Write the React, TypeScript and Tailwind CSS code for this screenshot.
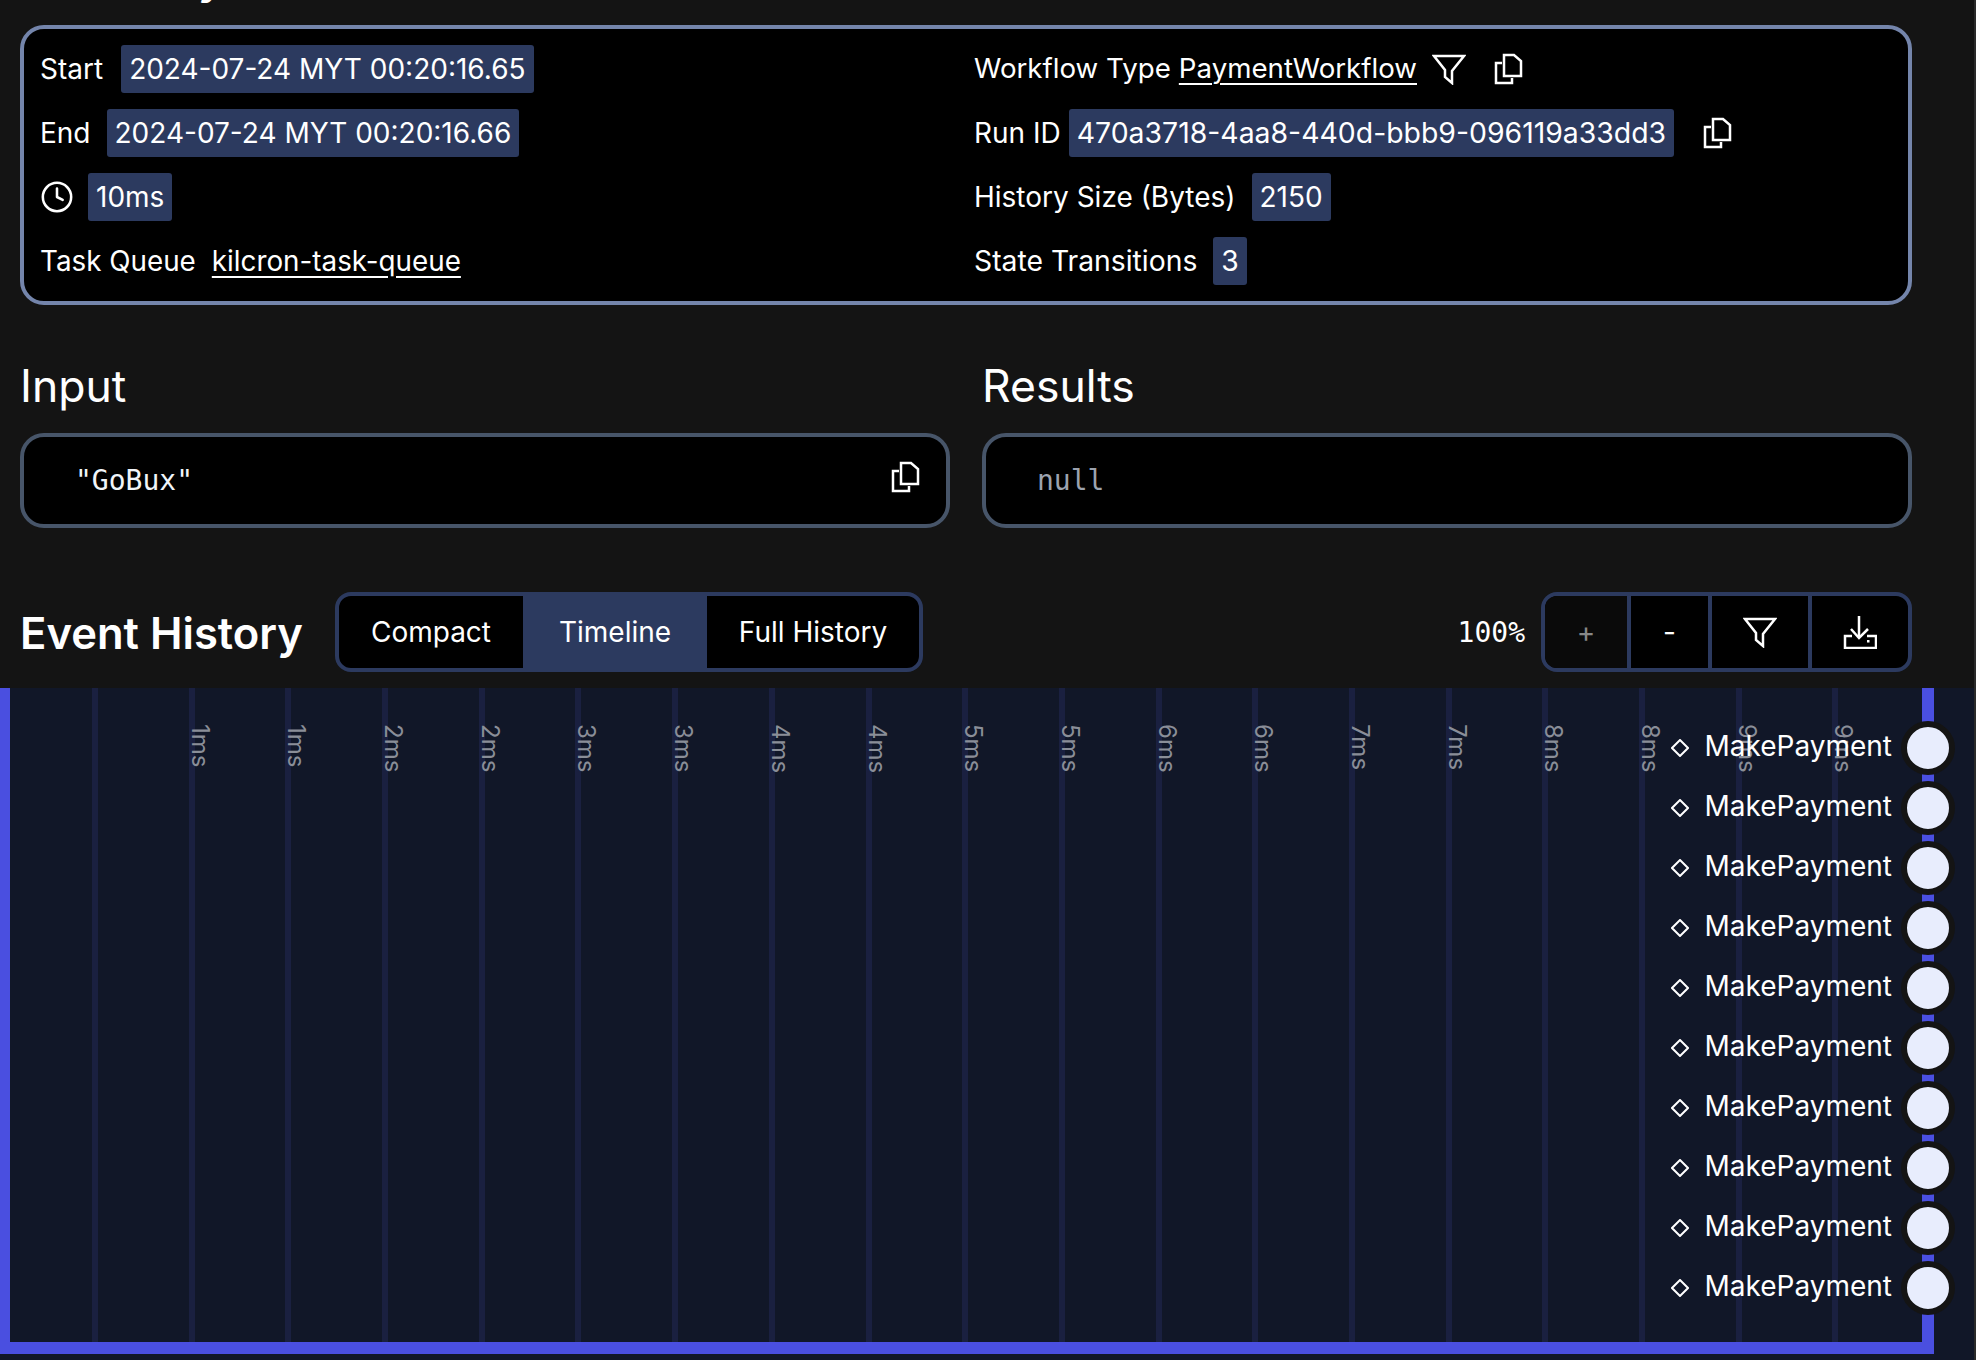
import { Clock } from 'lucide-react';

const ticks = ['', '1ms', '1ms', '2ms', '2ms', '3ms', '3ms', '4ms', '4ms', '5ms', '5ms', '6ms', '6ms', '7ms', '7ms', '8ms', '8ms', '9ms', '9ms'];

function Tag({ children }: { children: React.ReactNode }) {
  return <span className="inline-flex h-12 items-center rounded-[3px] bg-[#2c3a5f] px-2">{children}</span>;
}

function FilterIcon({ className }: { className?: string }) {
  return (
    <svg viewBox="0 0 34 32" fill="none" stroke="currentColor" strokeWidth="2.5" className={className}>
      <path d="M2 3H32L20 18V30L13 24V17Z" />
    </svg>
  );
}

function CopyIcon({ className }: { className?: string }) {
  return (
    <svg viewBox="0 0 30 32" fill="none" stroke="currentColor" strokeWidth="2.5" className={className}>
      <path d="M10 2H20L27 8V23H10Z" />
      <path d="M8 10H2V30H18V25" />
    </svg>
  );
}

function DownloadIcon({ className }: { className?: string }) {
  return (
    <svg viewBox="0 0 34 34" fill="none" stroke="currentColor" strokeWidth="2.5" className={className}>
      <path d="M16 1V22" />
      <path d="M8 14L16 23L25 14" />
      <path d="M9 21H2V33H33V21H24" />
      <rect x="24" y="25" width="2.5" height="2.5" fill="currentColor" stroke="none" />
    </svg>
  );
}

function Diamond() {
  return (
    <svg viewBox="0 0 18 18" fill="none" stroke="currentColor" strokeWidth="2" className="h-[18px] w-[18px]">
      <path d="M9 1L17 9L9 17L1 9Z" />
    </svg>
  );
}

function Timeline() {
  return (
    <div className="relative h-[672px] bg-[#111728]">
      <div className="absolute top-0 left-[92px] flex h-[654px]">
        {ticks.map((tick, i) => (
          <div key={i} className="h-full w-[96.7px] border-l-[6px] border-[#1a2040] pt-[36px]">
            {tick && (
              <span className="-ml-[7px] block text-[24px] leading-[25px] text-[#8a8e98] [writing-mode:vertical-rl]">
                {tick}
              </span>
            )}
          </div>
        ))}
      </div>
      <div className="relative h-[666px] w-[1934px] border-r-[12px] border-b-[12px] border-l-[10px] border-[#4a4fe0] pt-[33px]">
        <div className="-mr-[33px] flex flex-col items-end gap-[6px]">
          {Array.from({ length: 10 }).map((_, i) => (
            <div key={i} className="flex h-[54px] items-center text-white">
              <Diamond />
              <span className="mr-[9px] ml-[15px] -mt-[5px] text-[28px]">MakePayment</span>
              <span className="h-[54px] w-[54px] rounded-full border-[6px] border-[#141414] bg-[#e8edfd]" />
            </div>
          ))}
        </div>
      </div>
    </div>
  );
}

export default function App() {
  return (
    <div className="flex h-[1360px] w-[1976px] overflow-hidden bg-[#2a2a2a] font-['Inter',sans-serif] text-white">
      <div className="h-full w-[1974px] shrink-0 overflow-hidden bg-[#141414]">
        <h1 className="mx-5 -mt-[47px] h-[72px] text-[44px] leading-[50px] font-semibold">Summary</h1>

        <div className="mx-5 grid h-[280px] w-[1892px] grid-cols-[917px_917px] gap-x-[17px] gap-y-4 rounded-[24px] border-4 border-[#7485ab] bg-black px-4 py-4 text-[28px]">
          <div className="flex items-center gap-[18px]">
            <span>Start</span>
            <Tag>2024-07-24 MYT 00:20:16.65</Tag>
          </div>
          <div className="flex items-center text-[27.7px]">
            <span>Workflow Type</span>
            <a className="ml-2 underline underline-offset-[5px]">PaymentWorkflow</a>
            <FilterIcon className="ml-[15px] h-8 w-[34px]" />
            <CopyIcon className="ml-[28px] h-8 w-[30px]" />
          </div>
          <div className="flex items-center gap-4">
            <span>End</span>
            <Tag>2024-07-24 MYT 00:20:16.66</Tag>
          </div>
          <div className="flex items-center">
            <span>Run ID</span>
            <span className="ml-2 text-[28.4px]"><Tag>470a3718-4aa8-440d-bbb9-096119a33dd3</Tag></span>
            <CopyIcon className="ml-[29px] h-8 w-[30px]" />
          </div>
          <div className="flex items-center gap-[14px]">
            <Clock className="h-[34px] w-[34px]" strokeWidth={1.8} />
            <Tag>10ms</Tag>
          </div>
          <div className="flex items-center gap-4">
            <span>History Size (Bytes)</span>
            <Tag>2150</Tag>
          </div>
          <div className="flex items-center gap-4 pt-[1px] text-[27.8px]">
            <span>Task Queue</span>
            <a className="underline underline-offset-[5px]">kilcron-task-queue</a>
          </div>
          <div className="flex items-center gap-4 text-[28.3px]">
            <span>State Transitions</span>
            <Tag>3</Tag>
          </div>
        </div>

        <div className="mx-5 mt-[52px] grid w-[1892px] grid-cols-[930px_930px] gap-x-8">
          <div>
            <h2 className="h-[76px] text-[44.5px] leading-[58px]">Input</h2>
            <div className="flex h-[95px] items-center justify-between rounded-[24px] border-4 border-[#475569] bg-black pr-[25px] pl-[51px] font-['DejaVu_Sans_Mono',monospace] text-[28px]">
              <span className="mt-[1px] text-[#f1f5f9]">"GoBux"</span>
              <CopyIcon className="-mt-[8px] h-8 w-[30px]" />
            </div>
          </div>
          <div>
            <h2 className="h-[76px] text-[44.5px] leading-[58px]">Results</h2>
            <div className="flex h-[95px] items-center rounded-[24px] border-4 border-[#475569] bg-black pl-[51px] font-['DejaVu_Sans_Mono',monospace] text-[28px] text-[#9ca3af]">
              <span className="mt-[1px]">null</span>
            </div>
          </div>
        </div>

        <div className="mt-[64px] ml-5 flex h-[80px] w-[1892px] items-center">
          <h2 className="mt-[3px] text-[43.6px] font-semibold">Event History</h2>
          <div className="ml-8 flex h-[80px] overflow-hidden rounded-[16px] border-4 border-[#2c3a5f] bg-black text-[28px]">
            <span className="flex w-[184px] items-center justify-center">Compact</span>
            <span className="flex w-[184px] items-center justify-center bg-[#2c3a5f]">Timeline</span>
            <span className="flex w-[212px] items-center justify-center">Full History</span>
          </div>
          <span className="mt-[2px] mr-4 ml-auto font-['DejaVu_Sans_Mono',monospace] text-[28px]">100%</span>
          <div className="flex h-[80px] w-[371px] overflow-hidden rounded-[16px] border-4 border-[#2c3a5f] bg-black">
            <span className="flex w-[82px] items-center justify-center bg-[#0a0a0a] text-[28px] text-[#888888]">+</span>
            <span className="flex w-[81px] items-center justify-center border-l-4 border-[#2c3a5f] text-[28px]">-</span>
            <span className="flex w-[100px] items-center justify-center border-l-4 border-[#2c3a5f]">
              <FilterIcon className="h-8 w-[34px]" />
            </span>
            <span className="flex flex-1 items-center justify-center border-l-4 border-[#2c3a5f]">
              <DownloadIcon className="h-[34px] w-[34px]" />
            </span>
          </div>
        </div>

        <div className="mt-4">
          <Timeline />
        </div>
      </div>
    </div>
  );
}
